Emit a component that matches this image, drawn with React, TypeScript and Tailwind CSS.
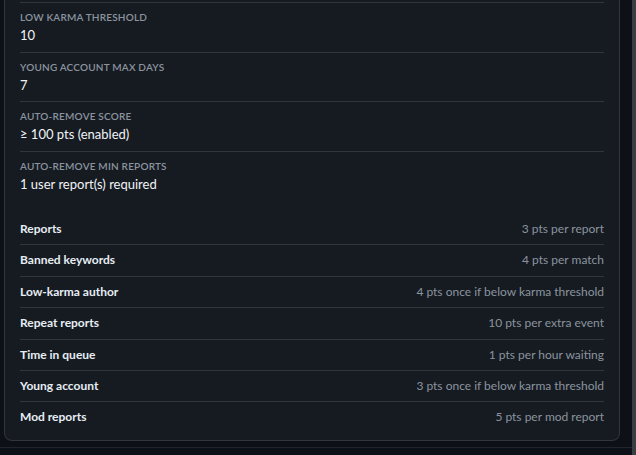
const settings = [
  { label: "Low karma threshold", value: "10" },
  { label: "Young account max days", value: "7" },
  { label: "Auto-remove score", value: "≥ 100 pts (enabled)" },
  { label: "Auto-remove min reports", value: "1 user report(s) required" },
];

const weights = [
  { name: "Reports", rule: "3 pts per report" },
  { name: "Banned keywords", rule: "4 pts per match" },
  { name: "Low-karma author", rule: "4 pts once if below karma threshold" },
  { name: "Repeat reports", rule: "10 pts per extra event" },
  { name: "Time in queue", rule: "1 pts per hour waiting" },
  { name: "Young account", rule: "3 pts once if below karma threshold" },
  { name: "Mod reports", rule: "5 pts per mod report" },
];

export default function App() {
  return (
    <div
      className="flex h-[455px] w-full overflow-hidden bg-[#0d1117] text-[#e6edf3]"
      style={{ fontFamily: 'Lato, "Noto Sans", sans-serif' }}
    >
      <div className="flex min-w-0 flex-1 flex-col">
        <div className="ml-[4px] w-[616px] rounded-b-lg border border-t-0 border-[#30363d] bg-[#161b22] px-[15px] pt-[2px] pb-[7px]">
          {settings.map((s) => (
            <div key={s.label} className="border-t border-[#30363d] pt-[6px] pb-[5.5px]">
              <div className="text-[10px] leading-[16px] font-semibold uppercase tracking-[0.02em] text-[#8b949e]">
                {s.label}
              </div>
              <div className="text-[13px] leading-[21px] text-[#f0f3f6]">{s.value}</div>
            </div>
          ))}

          <div className="mt-[14px]">
            {weights.map((w, i) => (
              <div
                key={w.name}
                className={
                  "flex items-center justify-between py-[5px] text-[12px] leading-[20.4px] " +
                  (i < weights.length - 1 ? "border-b border-[#30363d]" : "")
                }
              >
                <span className="font-bold text-[#e6edf3]">{w.name}</span>
                <span className="text-[#8b949e]">{w.rule}</span>
              </div>
            ))}
          </div>
        </div>
        <div className="mt-[6px] flex-1 border-t border-[#21262d] bg-[#0d1117]" />
      </div>
      <div className="w-[4px] bg-[#3a3d41]" />
    </div>
  );
}
